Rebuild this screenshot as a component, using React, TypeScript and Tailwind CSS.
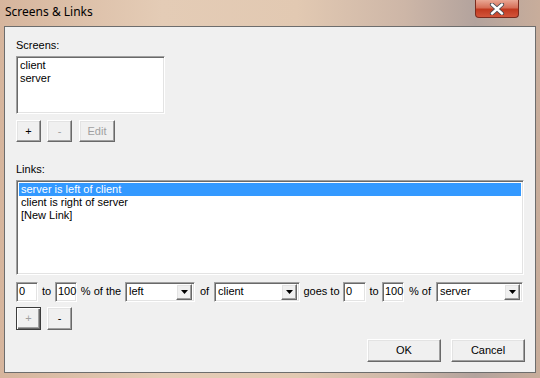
import React from 'react';

const sunken =
  'bg-white border border-t-[#a0a0a0] border-l-[#a0a0a0] border-r-white border-b-white shadow-[inset_1px_1px_0_#696969,inset_-1px_-1px_0_#e3e3e3]';

const raised =
  'bg-[#f0f0f0] border border-t-white border-l-white border-r-[#696969] border-b-[#696969] shadow-[inset_-1px_-1px_0_#a0a0a0,inset_1px_1px_0_#e3e3e3]';

function Button({
  children,
  disabled,
  isDefault,
  className = '',
}: {
  children: React.ReactNode;
  disabled?: boolean;
  isDefault?: boolean;
  className?: string;
}) {
  const frame = isDefault
    ? 'bg-[#f0f0f0] border border-[#3c3c3c] shadow-[inset_1px_1px_0_#fff,inset_-1px_-1px_0_#696969,inset_-2px_-2px_0_#a0a0a0]'
    : raised;
  return (
    <div
      className={`flex items-center justify-center ${frame} ${
        disabled ? 'text-[#a0a0a0]' : 'text-black'
      } ${className}`}
    >
      {children}
    </div>
  );
}

function Field({ value, className = '' }: { value: string; className?: string }) {
  return (
    <div className={`${sunken} h-[20px] flex items-center pl-[2px] ${className}`}>{value}</div>
  );
}

function Select({ value, className = '' }: { value: string; className?: string }) {
  return (
    <div className={`${sunken} h-[20px] flex items-center pl-[3px] pr-[2px] ${className}`}>
      <span className="flex-1">{value}</span>
      <div className={`${raised} w-[16px] h-[16px] flex items-center justify-center`}>
        <svg width="7" height="4" viewBox="0 0 7 4">
          <path d="M0 0h7L3.5 4z" fill="#000" />
        </svg>
      </div>
    </div>
  );
}

export default function App() {
  return (
    <div className="w-[540px] h-[378px] flex flex-col overflow-hidden bg-[linear-gradient(90deg,#d6b59d,#e4ccb6_30%,#e2c9b2_55%,#cdb6a7_75%,#b3a39d_88%,#c8ad9b)]">
      {/* Title bar */}
      <div className="h-[26px] flex items-start">
        <div className="pl-[5px] pt-[3px] text-[12px] leading-[18px] text-black font-['Noto_Sans',sans-serif]">
          Screens &amp; Links
        </div>
        <div className="ml-auto mr-[21px] w-[44px] h-[18px] rounded-b-[4px] border border-t-0 border-[#7a2b1e] bg-[linear-gradient(180deg,#e9a794,#d66f58_45%,#c1391f_55%,#d2543a)] flex items-center justify-center">
          <svg width="16" height="12" viewBox="0 0 16 12">
            <path d="M3 1.5L13 10.5M13 1.5L3 10.5" stroke="#4a4a52" strokeWidth="4.2" strokeLinecap="round" />
            <path d="M3 1.5L13 10.5M13 1.5L3 10.5" stroke="#fff" strokeWidth="2.4" strokeLinecap="round" />
          </svg>
        </div>
      </div>

      {/* Client area */}
      <div className="ml-[4px] w-[532px] h-[347px] border border-[#6d6d6d] bg-[#f0f0f0] pl-[11px] pt-[12px] flex flex-col text-[11px] leading-[13px] text-black font-['Liberation_Sans',Arial,sans-serif]">
        <div>Screens:</div>
        <div className={`${sunken} mt-[4px] w-[149px] h-[58px] pl-[3px] pt-[2px]`}>
          <div>client</div>
          <div>server</div>
        </div>
        <div className="mt-[6px] flex h-[22px]">
          <Button className="w-[25px]">+</Button>
          <Button disabled className="w-[25px] ml-[6px]">-</Button>
          <Button disabled className="w-[36px] ml-[7px]">Edit</Button>
        </div>

        <div className="mt-[21px]">Links:</div>
        <div className={`${sunken} mt-[4px] w-[508px] h-[95px] p-[2px]`}>
          <div className="bg-[#3399ff] text-white pl-[2px] h-[13px]">server is left of client</div>
          <div className="pl-[2px]">client is right of server</div>
          <div className="pl-[2px]">[New Link]</div>
        </div>

        <div className="mt-[6px] flex items-center h-[21px]">
          <Field value="0" className="w-[22px]" />
          <span className="w-[17px] text-center">to</span>
          <Field value="100" className="w-[22px]" />
          <span className="w-[48px] text-center">% of the</span>
          <Select value="left" className="w-[70px]" />
          <span className="w-[19px] text-center">of</span>
          <Select value="client" className="w-[86px]" />
          <span className="w-[43px] text-center">goes to</span>
          <Field value="0" className="w-[23px]" />
          <span className="w-[16px] text-center">to</span>
          <Field value="100" className="w-[22px]" />
          <span className="w-[32px] text-center">% of</span>
          <Select value="server" className="w-[87px]" />
        </div>

        <div className="mt-[5px] flex h-[23px]">
          <Button disabled isDefault className="w-[25px]">+</Button>
          <Button className="w-[25px] ml-[6px]">-</Button>
        </div>

        <div className="mt-[9px] flex justify-end pr-[10px] h-[23px]">
          <Button className="w-[74px]">OK</Button>
          <Button className="w-[74px] ml-[10px]">Cancel</Button>
        </div>
      </div>
    </div>
  );
}
